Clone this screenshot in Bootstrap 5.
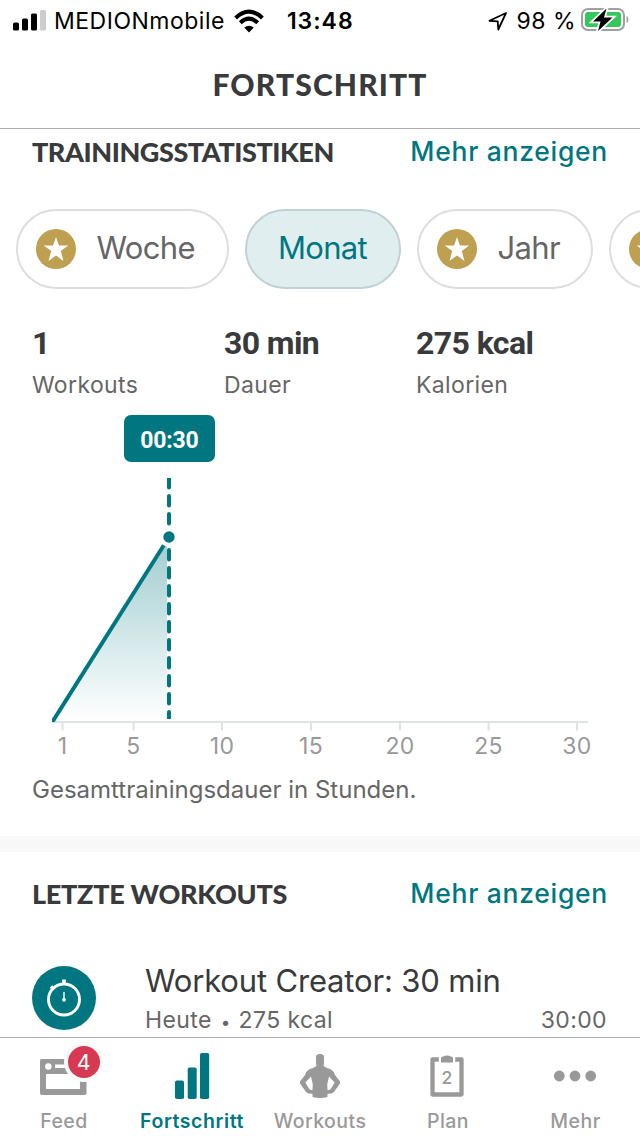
<!DOCTYPE html>
<html lang="de">
<head>
<meta charset="utf-8">
<meta name="viewport" content="width=device-width, initial-scale=1">
<title>Fortschritt</title>
<link href="https://cdn.jsdelivr.net/npm/bootstrap@5.3.0/dist/css/bootstrap.min.css" rel="stylesheet">
<style>
:root{--teal:#007780;--ink:#383a3b;--mute:#666;--soft:#999;--rule:#acacac}
body{font-family:Inter,"Liberation Sans",sans-serif;color:var(--ink);background:#fff;font-size:23px;line-height:30px}
.screen{height:1136px}
.status-bar{height:41px;color:#000;padding:0 11px 0 13px}
.carrier{letter-spacing:.5px;margin-left:8px}
.clock{font-weight:600;letter-spacing:1px;margin-left:22px}
.percent{letter-spacing:.5px;margin:0 5px 0 8px}
.app-bar{height:88px;border-bottom:1px solid var(--rule)}
.app-title{font:900 30px/36px Lato,sans-serif;letter-spacing:1.15px;padding-bottom:2px}
.section-head{height:46px;padding:0 32px}
.section-title{font:900 27px/32px Lato,sans-serif;letter-spacing:-.44px;padding-bottom:1px}
.section-title.wide{letter-spacing:-.26px}
.more-link{font-size:26.5px;font-weight:500;letter-spacing:.7px;color:var(--teal);margin-bottom:3px}
.chips{padding:0 0 0 16px;margin-top:34px;gap:16px}
.chip{height:80px;border:2px solid #dedede;border-radius:40px;color:var(--mute);font-size:31px;padding-left:18px;flex:none}
.chip span{letter-spacing:-.65px;padding-bottom:3px;margin-left:20.5px}
.chip.picked{background:#e0eeef;border-color:#c0d2d4;color:var(--teal);padding:0}
.chip.picked span{margin:0 1px 0 0}
.stats{padding:0 32px;margin-top:35px}
.stat{width:192px}
.stat b{display:block;font:700 32px/38px Roboto,sans-serif;letter-spacing:-.6px}
.stat small{display:block;font-size:23px;line-height:30px;letter-spacing:.37px;color:var(--mute);margin-top:8px}
.chart{height:366px}
.caption{font-size:24px;padding:9px 32px 0;height:70px;color:var(--mute)}
.band{height:16px;background:#f8f8f8}
.workout{padding:0 33px 0 32px;margin-top:26px}
.workout h3{font-size:31px;line-height:38px;letter-spacing:-.17px;margin:0 0 2px;font-weight:400}
.meta{color:var(--mute);letter-spacing:.4px;line-height:36px}
.meta i{font-style:normal;font-size:17px;line-height:1;margin:0 1px 0 2px}
.tab-bar{height:99px;border-top:1px solid var(--rule);z-index:2}
.tab{width:128px;color:var(--soft);font-size:19.5px;font-weight:500;letter-spacing:.45px;line-height:24px}
.tab svg{display:block}
.tab.on{color:var(--teal);font-weight:600;letter-spacing:.55px}
</style>
</head>
<body>
<div class="screen d-flex flex-column overflow-hidden">
  <header>
    <div class="status-bar d-flex align-items-center">
      <svg width="33" height="22" viewBox="0 0 33 22"><rect y="12.5" width="6" height="8" rx="1.6"/><rect x="9" y="8.500" width="6" height="12" rx="1.600"/><rect x="18" y="3.500" width="6" height="17" rx="1.600"/><rect x="27" y="0" width="6" height="20.500" rx="1.600" fill="#ccc"/></svg>
      <span class="carrier">MEDIONmobile</span>
      <svg class="ms-2" width="32" height="24" viewBox="0 0 32 24"><g fill="none" stroke="#000" stroke-width="4.100"><path d="M2.600 8.900Q16-3.500 29.400 8.900"/><path d="M7.300 13.700Q16 5.700 24.700 13.700"/></g><path d="M16 23.500l-4.800-5Q16 14.800 20.800 18.500z"/></svg>
      <span class="clock">13:48</span>
      <svg class="ms-auto" width="20" height="20" viewBox="0 0 20 20"><path d="M1.500 9.800L18 2 10.300 18.500 9.700 10.300z" fill="none" stroke="#000" stroke-width="1.800" stroke-linejoin="round"/></svg>
      <span class="percent">98 %</span>
      <svg width="48" height="26" viewBox="0 0 48 26" style="margin-bottom:3px"><rect x="1" y="3" width="42" height="21" rx="6" fill="none" stroke="#a0a0a0" stroke-width="2"/><path d="M45.500 10c2.500 1 2.500 6 0 7z" fill="#a0a0a0"/><rect x="4" y="6" width="36" height="15" rx="3" fill="#34c759"/><path d="M25.500 2.500L12 15.500h7.500l-2.500 9.500L31.500 11.500H23z" stroke="#fff" stroke-width="3.600"/><path d="M25.500 2.500L12 15.500h7.500l-2.500 9.500L31.500 11.500H23z"/></svg>
    </div>
    <div class="app-bar d-flex align-items-center justify-content-center">
      <h1 class="app-title m-0">FORTSCHRITT</h1>
    </div>
  </header>

  <main class="flex-grow-1 overflow-hidden">
    <section>
      <div class="section-head d-flex align-items-center justify-content-between">
        <h2 class="section-title m-0">TRAININGSSTATISTIKEN</h2>
        <a class="more-link text-decoration-none" href="#">Mehr anzeigen</a>
      </div>
      <svg width="0" height="0" class="position-absolute"><defs><symbol id="medal" viewBox="0 0 40 40"><circle cx="20" cy="20" r="20" fill="#bf9f50"/><path fill="#fff" d="M20 8l2.900 8.400 9.300.1-7.400 5.500 2.700 9.900L20 26.500l-7.500 5.400 2.700-9.900-7.400-5.500 9.300-.1z"/></symbol></defs></svg>
      <div class="chips d-flex">
        <div class="chip d-flex align-items-center" style="width:213px"><svg width="40" height="40"><use href="#medal"/></svg><span>Woche</span></div>
        <div class="chip picked d-flex align-items-center justify-content-center" style="width:156px"><span>Monat</span></div>
        <div class="chip d-flex align-items-center" style="width:176px"><svg width="40" height="40"><use href="#medal"/></svg><span>Jahr</span></div>
        <div class="chip d-flex align-items-center" style="width:213px"><svg width="40" height="40"><use href="#medal"/></svg></div>
      </div>
      <div class="stats d-flex">
        <div class="stat"><b>1</b><small>Workouts</small></div>
        <div class="stat"><b>30 min</b><small>Dauer</small></div>
        <div class="stat"><b>275 kcal</b><small>Kalorien</small></div>
      </div>
      <svg class="chart d-block w-100" viewBox="0 400 640 366">
        <defs><linearGradient id="fade" x1="0" y1="0" x2="0" y2="1"><stop offset="0" stop-color="#007780" stop-opacity=".38"/><stop offset="1" stop-color="#007780" stop-opacity="0"/></linearGradient></defs>
        <path d="M52 722H588" stroke="#dfe3e3" stroke-width="2"/>
        <path d="M62.500 723v7.500M133.500 723v7.500M222 723v7.500M311 723v7.500M400 723v7.500M488.500 723v7.500M577 723v7.500" stroke="#dfe3e3" stroke-width="2"/>
        <path d="M53 721L169 537V721z" fill="url(#fade)"/>
        <svg x="52" y="530" width="120" height="192" viewBox="52 530 120 192"><path d="M52 722.500L169 537" stroke="#007780" stroke-width="4"/></svg>
        <svg x="160" y="478" width="20" height="241" viewBox="160 478 20 241"><path d="M169 478V720" stroke="#fff" stroke-width="4"/><path d="M169 478V730" stroke="#007780" stroke-width="4" stroke-linecap="round" stroke-dasharray="9.500 8.500"/></svg>
        <circle cx="169" cy="537" r="10" fill="#fff"/><circle cx="169" cy="537" r="5.700" fill="#007780"/>
        <rect x="124" y="415" width="91" height="47" rx="7" fill="#007780"/>
        <text x="169.300" y="448" fill="#fff" text-anchor="middle" font-family="Roboto" font-weight="700" font-size="23" letter-spacing="-.2">00:30</text>
        <g fill="#999" font-size="23" letter-spacing=".3" text-anchor="middle"><text x="62.500" y="754">1</text><text x="133.500" y="754">5</text><text x="222" y="754">10</text><text x="311" y="754">15</text><text x="400" y="754">20</text><text x="488.500" y="754">25</text><text x="577" y="754">30</text></g>
      </svg>
      <p class="caption m-0">Gesamttrainingsdauer in Stunden.</p>
    </section>
    <div class="band"></div>
    <section>
      <div class="section-head d-flex align-items-center justify-content-between" style="height:84px">
        <h2 class="section-title wide m-0">LETZTE WORKOUTS</h2>
        <a class="more-link text-decoration-none" href="#">Mehr anzeigen</a>
      </div>
      <div class="workout d-flex">
        <svg class="flex-shrink-0 mt-1" width="64" height="64" viewBox="0 0 64 64"><circle cx="32" cy="32" r="32" fill="#007780"/><g fill="none" stroke="#fff"><circle cx="32" cy="33.500" r="15.500" stroke-width="2.900"/><path d="M32 13.500v5M19 20.500l3 3" stroke-width="3.600"/><path d="M32 26v7" stroke-width="1.400"/></g><circle cx="32" cy="33.800" r="1.900" fill="#fff"/></svg>
        <div class="flex-grow-1" style="margin-left:49px">
          <h3>Workout Creator: 30 min</h3>
          <div class="meta d-flex justify-content-between"><span>Heute <i>•</i> 275 kcal</span><span>30:00</span></div>
        </div>
      </div>
    </section>
  </main>

  <nav class="tab-bar d-flex bg-white flex-shrink-0">
    <div class="tab d-flex flex-column align-items-center"><svg width="128" height="71" viewBox="0 1038 128 71"><path fill="#999" d="M41.500 1059H85q1.500 0 1.500 1.500V1093q0 2-2 2H42q-2 0-2-2V1061q0-2 1.500-2z"/><path fill="#fff" d="M46 1074H80V1089H46zM55 1064.500H80V1068H55z"/><circle cx="48.300" cy="1066.500" r="3.200" fill="#fff"/><circle cx="84" cy="1062" r="20" fill="#fafafa"/><circle cx="84" cy="1062" r="16" fill="#d73852"/><text x="83.700" y="1070" fill="#fff" text-anchor="middle" font-size="21.500" font-weight="400" letter-spacing="0">4</text></svg><span>Feed</span></div>
    <div class="tab on d-flex flex-column align-items-center"><svg width="128" height="71" viewBox="128 1038 128 71" fill="#007780"><rect x="175" y="1080.500" width="9" height="18.500" rx="1.800"/><rect x="187.700" y="1067.500" width="9" height="31.500" rx="1.800"/><rect x="200" y="1053" width="9.200" height="46" rx="1.800"/></svg><span>Fortschritt</span></div>
    <div class="tab d-flex flex-column align-items-center"><svg width="128" height="71" viewBox="256 1038 128 71" fill="#999" fill-rule="evenodd"><path d="M316 1057Q316 1054 320 1054T324 1057V1063.500L323.500 1066Q326 1068 330 1069 333.500 1070.500 335 1075L340 1081.500 340 1083.500 333.500 1092.500 331.500 1093.500 327.500 1093.700V1097Q320 1099 312.500 1097V1093.700L308.500 1093.500 306.500 1092.500 300 1083.500 300 1081.500 305 1075Q306.500 1070.500 310 1069 314 1068 316.500 1066L316 1063.500zM311 1076.500L305.300 1082.500 309.500 1089.500 312.400 1090.200 312.800 1084.500zM329 1076.500L334.700 1082.500 330.500 1089.500 327.600 1090.200 327.200 1084.500z"/></svg><span>Workouts</span></div>
    <div class="tab d-flex flex-column align-items-center"><svg width="128" height="71" viewBox="384 1038 128 71" fill="#999"><path d="M438.800 1059.500H432.500V1094.500H461.500V1059.500H455.200" fill="none" stroke="#999" stroke-width="4.300" stroke-linejoin="round"/><path d="M441 1058Q441 1056.500 443 1056.500 447 1054.500 451 1056.500 453 1056.500 453 1058V1062.500H441z"/><text x="447" y="1083.500" text-anchor="middle" font-size="17.500" font-weight="500" letter-spacing="0">2</text></svg><span>Plan</span></div>
    <div class="tab d-flex flex-column align-items-center"><svg width="128" height="71" viewBox="512 1038 128 71" fill="#999"><circle cx="559.300" cy="1076" r="5.400"/><circle cx="575" cy="1076" r="5.400"/><circle cx="590.700" cy="1076" r="5.400"/></svg><span style="margin-right:1px">Mehr</span></div>
  </nav>
</div>
<script src="https://cdn.jsdelivr.net/npm/bootstrap@5.3.0/dist/js/bootstrap.bundle.min.js"></script>
</body>
</html>
